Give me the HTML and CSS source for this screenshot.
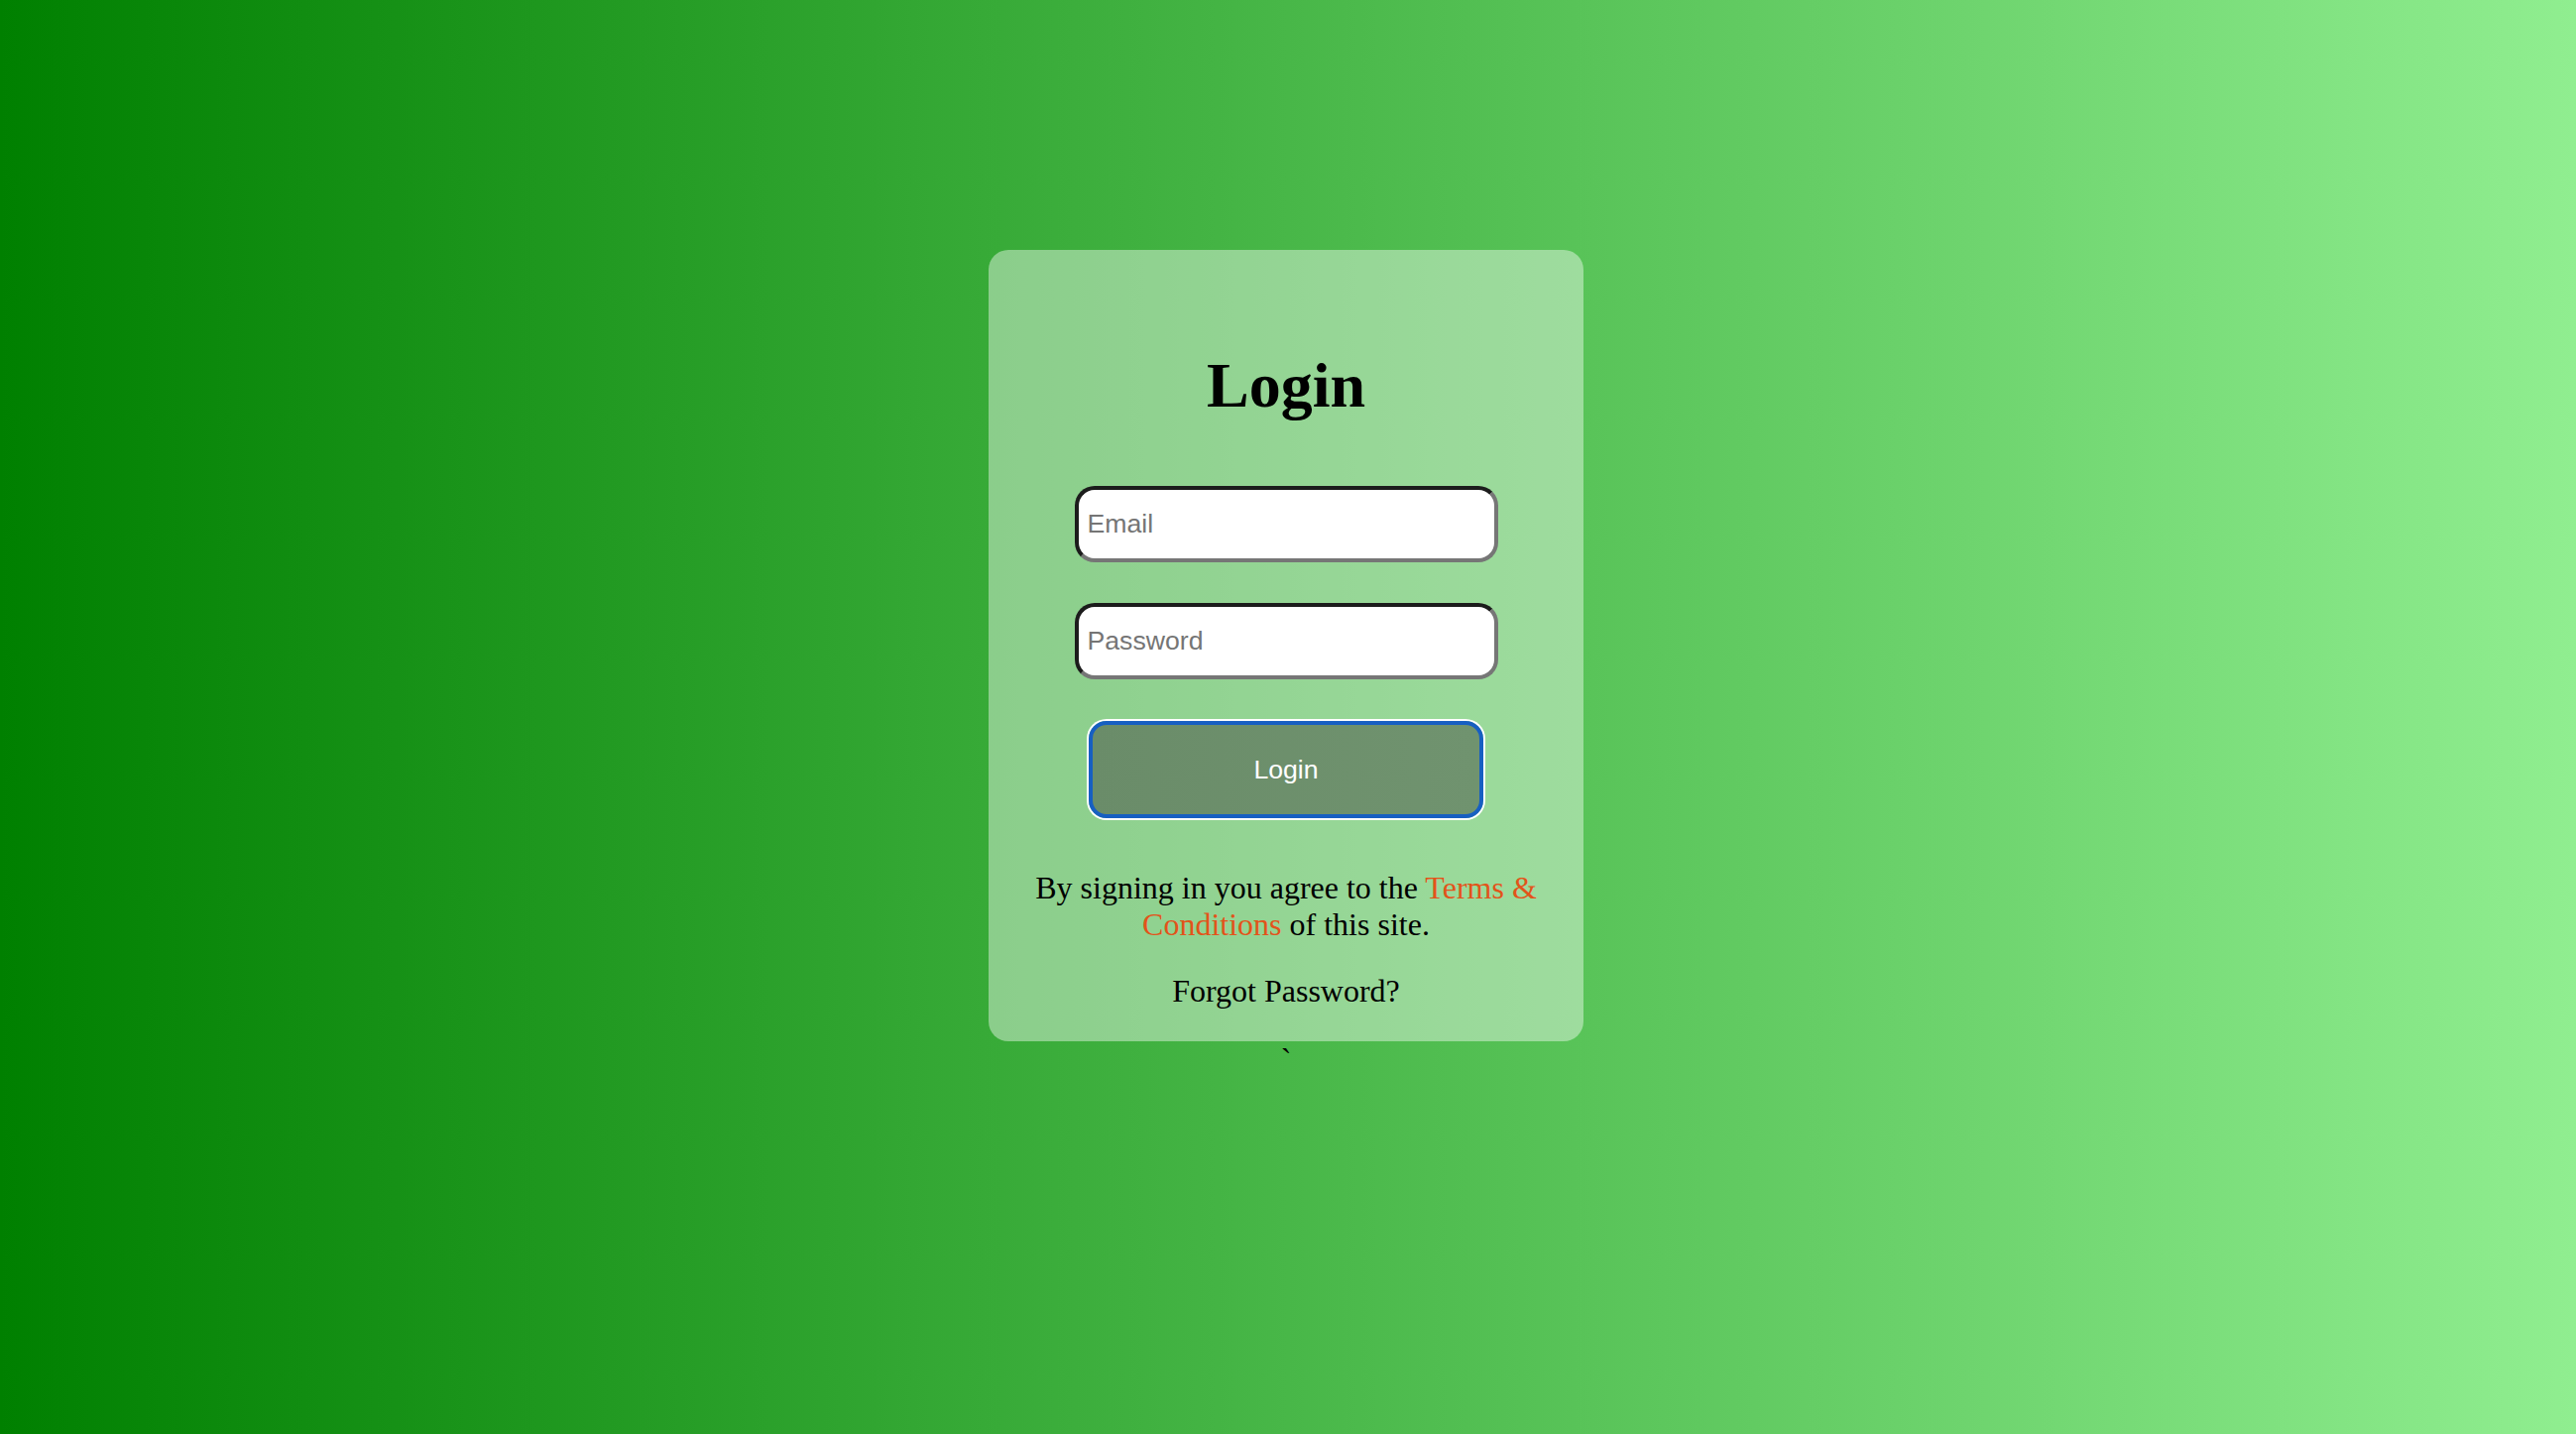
FILE: index.html
```html
<!DOCTYPE html>
<html lang="en">
<head>
<meta charset="utf-8">
<title>Login</title>
<link rel="stylesheet" href="styles.css">
</head>
<body>
<div class="page">
  <form class="card">
    <h1 class="title">Login</h1>
    <input class="field" type="email" placeholder="Email">
    <input class="field field-gap" type="password" placeholder="Password">
    <button class="btn" type="button">Login</button>
    <p class="terms">By signing in you agree to the <a class="link">Terms &amp; Conditions</a> of this site.</p>
    <p class="forgot">Forgot Password?</p>
  </form>
  <div class="tick">`</div>
</div>
</body>
</html>
```
FILE: styles.css
```css
html, body {
  margin: 0;
  padding: 0;
}
body {
  min-height: 100vh;
  background: linear-gradient(to right, #008000, #90ee90);
  font-family: "Liberation Serif", "Times New Roman", serif;
  color: #000;
}
.page {
  display: flex;
  flex-direction: column;
  align-items: center;
  padding-top: 252px;
  padding-right: 4px;
}
.card {
  width: 600px;
  box-sizing: border-box;
  padding: 0 40px 33px;
  border-radius: 20px;
  background: rgba(255, 255, 255, 0.42);
  display: flex;
  flex-direction: column;
  align-items: center;
}
.title {
  margin: 100px 0 64px;
  font-size: 64px;
  line-height: 74px;
  font-weight: bold;
}
.field {
  width: 427px;
  height: 77px;
  box-sizing: border-box;
  margin: 0;
  padding: 0 9px;
  border-width: 4px;
  border-style: solid;
  border-color: #1c1c1c #767676 #767676 #1c1c1c;
  border-radius: 20px;
  background: #fff;
  font-family: "Liberation Sans", Arial, sans-serif;
  font-size: 26.67px;
  color: #000;
  outline: none;
}
.field::placeholder {
  color: #757575;
}
.field-gap {
  margin-top: 41px;
}
.btn {
  margin-top: 42px;
  width: 398px;
  height: 98px;
  box-sizing: border-box;
  border: 4px solid #175fc2;
  border-radius: 18px;
  box-shadow: 0 0 0 2px #fff;
  background: linear-gradient(to right, #6a8c69, #70936f);
  color: #fff;
  font-family: "Liberation Sans", Arial, sans-serif;
  font-size: 26.67px;
  cursor: pointer;
}
.terms {
  margin: 52px 0 0;
  width: 100%;
  text-align: center;
  font-size: 32px;
  line-height: 36.8px;
}
.link {
  color: #e3531a;
}
.forgot {
  margin: 30px 0 0;
  font-size: 32px;
  line-height: 36.8px;
  text-align: center;
}
.tick {
  font-size: 32px;
  line-height: 36.8px;
}
```
